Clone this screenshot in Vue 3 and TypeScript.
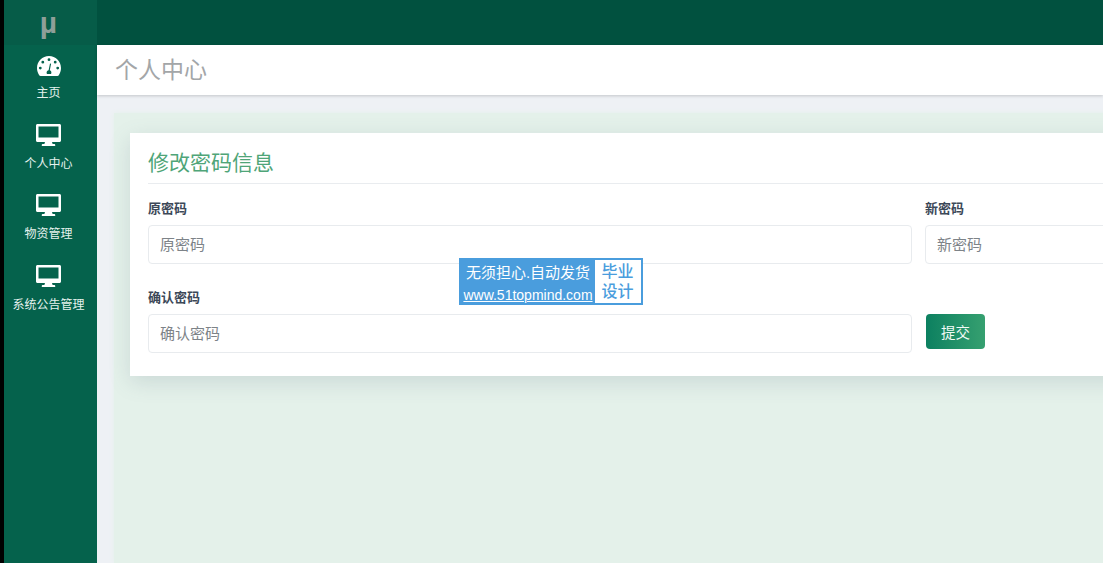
<script setup lang="ts">
const navItems: { label: string; icon: 'gauge' | 'monitor' }[] = [
  { label: '主页', icon: 'gauge' },
  { label: '个人中心', icon: 'monitor' },
  { label: '物资管理', icon: 'monitor' },
  { label: '系统公告管理', icon: 'monitor' },
]
</script>

<template>
  <div class="app">
    <aside class="sidebar">
      <div class="logo">µ</div>
      <div v-for="item in navItems" :key="item.label" class="nav-item">
        <svg v-if="item.icon === 'gauge'" class="icon gauge" viewBox="0 0 24 20">
          <path fill="#fff" fill-rule="evenodd" d="M12 0C5.400 0 0 5.300 0 12c0 2.600.8 5.200 2.200 7.200.3.500.8.800 1.400.800h16.800c.6 0 1.100-.3 1.400-.8C23.200 17.200 24 14.600 24 12 24 5.300 18.600 0 12 0ZM12 2.300a1.400 1.400 0 1 1 0 2.800 1.400 1.400 0 0 1 0-2.800ZM5.800 4.800a1.400 1.400 0 1 1 0 2.800 1.400 1.400 0 0 1 0-2.800ZM18.200 4.800a1.400 1.400 0 1 1 0 2.800 1.400 1.400 0 0 1 0-2.800ZM3.300 10.700a1.400 1.400 0 1 1 0 2.800 1.400 1.400 0 0 1 0-2.800ZM20.700 10.700a1.400 1.400 0 1 1 0 2.800 1.400 1.400 0 0 1 0-2.800ZM13 7.500l1.100.3-1.300 6.500a2.400 2.400 0 0 1 1.600 2.300c0 .5-.1.900-.4 1.300H10c-.3-.4-.4-.8-.4-1.300 0-1.200.9-2.200 2-2.400Z" />
        </svg>
        <svg v-else class="icon monitor" viewBox="0 0 25 22">
          <path fill="#fff" fill-rule="evenodd" d="M1.500 0h22C24.300 0 25 .7 25 1.500v15c0 .8-.7 1.500-1.500 1.500H16l.6 2h1.900c.4 0 .7.300.7.700V22H5.800v-1.300c0-.4.300-.7.700-.7h1.900L9 18H1.500C.7 18 0 17.300 0 16.500v-15C0 .7.700 0 1.500 0ZM2.500 2.500v11h20v-11Z" />
        </svg>
        <span class="nav-label">{{ item.label }}</span>
      </div>
    </aside>
    <div class="edge"></div>
    <div class="main">
      <header class="topbar"></header>
      <div class="title-bar">个人中心</div>
      <div class="content">
        <section class="panel">
          <div class="card">
            <h2 class="card-title">修改密码信息</h2>
            <form class="form" @submit.prevent>
              <label class="field">
                <span class="field-label">原密码</span>
                <input class="input" placeholder="原密码" />
              </label>
              <label class="field">
                <span class="field-label">新密码</span>
                <input class="input" placeholder="新密码" />
              </label>
              <label class="field">
                <span class="field-label">确认密码</span>
                <input class="input" placeholder="确认密码" />
              </label>
              <div class="actions">
                <button class="submit" type="submit">提交</button>
              </div>
            </form>
          </div>
        </section>
      </div>
    </div>
    <div class="watermark">
      <div class="wm-left">
        <span class="wm-top">无须担心.自动发货</span>
        <span class="wm-url">www.51topmind.com</span>
      </div>
      <div class="wm-right">毕业<br />设计</div>
    </div>
  </div>
</template>

<style>
html, body { margin: 0; overflow: hidden; }
</style>

<style scoped>
.app {
  position: relative;
  display: flex;
  width: 1103px;
  height: 563px;
  overflow: hidden;
  font-family: "Liberation Sans", "Noto Sans CJK SC", sans-serif;
  background: #eef1f5;
}
.edge { position: absolute; left: 0; top: 0; bottom: 0; width: 4px; background: #000; }
.sidebar {
  flex: 0 0 97px;
  background: #05624c;
  display: flex;
  flex-direction: column;
}
.logo {
  height: 45px;
  background: #065c48;
  color: #8f9f99;
  font-size: 30px;
  font-weight: 700;
  line-height: 45px;
  text-align: center;
}
.nav-item {
  height: 70.500px;
  box-sizing: border-box;
  padding-top: 10px;
  display: flex;
  flex-direction: column;
  align-items: center;
  color: #e6f2ee;
}
.icon { display: block; flex: none; }
.gauge { width: 24px; height: 20px; margin-top: 1px; margin-bottom: 9px; }
.monitor { width: 25px; height: 22px; margin-top: -2px; margin-bottom: 10px; }
.nav-label { font-size: 12px; line-height: 16px; white-space: nowrap; }
.main { flex: 1; min-width: 0; display: flex; flex-direction: column; }
.topbar { height: 45px; flex: none; background: #01513f; }
.title-bar {
  height: 50px;
  flex: none;
  background: #fff;
  box-shadow: 0 1px 3px rgba(0, 0, 0, 0.18);
  color: #a3a6a8;
  font-size: 23px;
  line-height: 50px;
  padding-left: 18px;
  position: relative;
}
.content { flex: 1; padding: 18px 0 0 17px; min-height: 0; }
.panel {
  height: 100%;
  width: 1100px;
  background: #e4f1ea;
  box-shadow: 0 0 5px #e4f1ea;
  padding: 20px 0 0 16px;
  box-sizing: border-box;
}
.card {
  width: 1500px;
  height: 243px;
  box-sizing: border-box;
  background: #fff;
  padding: 15px 18px 0;
  box-shadow: 0 6px 20px rgba(90, 110, 130, 0.18);
}
.card-title {
  margin: 0 0 17px;
  height: 36px;
  box-sizing: border-box;
  font-size: 21px;
  line-height: 30px;
  font-weight: 400;
  color: #4fa578;
  border-bottom: 1px solid #e9ecef;
}
.form {
  display: grid;
  grid-template-columns: 764px 400px;
  column-gap: 13px;
  row-gap: 25.500px;
}
.field { display: block; }
.field-label {
  display: block;
  font-size: 13px;
  font-weight: 700;
  line-height: 16px;
  color: #3c4858;
  margin-bottom: 8px;
}
.input {
  display: block;
  width: 100%;
  height: 39px;
  box-sizing: border-box;
  border: 1px solid #e8ebee;
  border-radius: 4px;
  background: #fff;
  padding: 0 11px;
  font: inherit;
  font-size: 15px;
  outline: none;
}
.input::placeholder { color: #7d8388; opacity: 1; }
.actions { display: flex; align-items: flex-end; padding-bottom: 4px; padding-left: 1px; }
.submit {
  width: 59px;
  height: 35px;
  border: none;
  border-radius: 4px;
  background: linear-gradient(90deg, #0c8060, #36a070);
  color: #f2fbf6;
  font: inherit;
  font-size: 14.500px;
}
.watermark {
  position: absolute;
  left: 459px;
  top: 258px;
  width: 184px;
  height: 47px;
  box-sizing: border-box;
  border: 2px solid #4a9ddd;
  background: #4a9ddd;
  display: flex;
  line-height: 1;
}
.wm-left {
  flex: 1;
  display: flex;
  flex-direction: column;
  align-items: center;
  color: #fff;
  padding-top: 5px;
}
.wm-top { font-size: 15px; line-height: 16px; white-space: nowrap; }
.wm-url { font-size: 14px; margin-top: 7px; text-decoration: underline; text-decoration-thickness: 1px; white-space: nowrap; }
.wm-right {
  flex: 0 0 46px;
  background: #fff;
  color: #4a9ddd;
  font-size: 16px;
  font-weight: 500;
  line-height: 20px;
  text-align: center;
  padding-top: 2px;
  padding-right: 1px;
  box-sizing: border-box;
}
</style>
